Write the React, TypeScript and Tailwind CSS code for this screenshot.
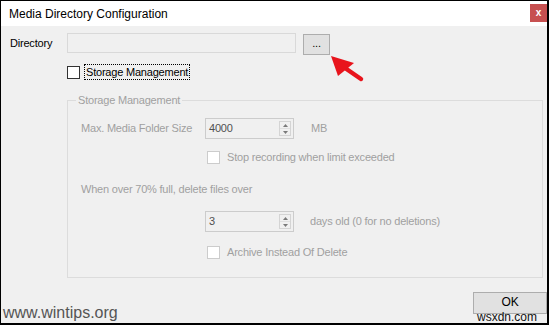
import React from 'react';

const font = "font-['Liberation_Sans',Arial,sans-serif]";

const Spinner: React.FC<{ value: string }> = ({ value }) => (
  <div className="w-[89px] h-[21px] border border-[#cccccc] bg-[#f0f0f0] flex items-center justify-between pl-[3px] pr-[2px]">
    <span className="text-[#505050] text-[11px]">{value}</span>
    <div className="w-[12px] h-[15px] border border-[#d4d4d4] flex flex-col">
      <div className="flex-1 flex items-center justify-center border-b border-[#e0e0e0]">
        <svg width="5" height="3" viewBox="0 0 5 3"><path d="M0 3 L2.5 0 L5 3 Z" fill="#7a7a7a" /></svg>
      </div>
      <div className="flex-1 flex items-center justify-center">
        <svg width="5" height="3" viewBox="0 0 5 3"><path d="M0 0 L2.5 3 L5 0 Z" fill="#7a7a7a" /></svg>
      </div>
    </div>
  </div>
);

const Check: React.FC<{ dark?: boolean }> = ({ dark }) => (
  <div
    className={
      dark
        ? 'w-[13px] h-[13px] border border-[#333333] bg-white'
        : 'w-[13px] h-[13px] border border-[#cccccc] bg-white'
    }
  />
);

export default function App() {
  return (
    <div className={`${font} relative w-[549px] h-[325px] overflow-hidden border-l border-t border-r-2 border-b-2 border-black bg-[#f0f0f0]`}>
      {/* title bar */}
      <div className="h-[25px] bg-white flex justify-between">
        <span className="self-center pl-[8px] text-[12px] text-black leading-none">Media Directory Configuration</span>
        <div className="mt-[3px] w-[17px] h-[18px] bg-[#c75050] flex items-center justify-center text-white text-[10px] font-bold leading-none">
          x
        </div>
      </div>

      <div className="text-[11px] tracking-[-0.2px] leading-none">
        {/* directory row */}
        <div className="mt-[7px] pl-[9px] flex items-start">
          <span className="w-[57px] h-[20px] flex items-center text-black">Directory</span>
          <div className="w-[229px] h-[20px] border border-[#d9d9d9] bg-[#f0f0f0]" />
          <button className="ml-[7px] mt-[1px] w-[27px] h-[21px] border border-[#adadad] bg-[#e1e1e1] text-black text-[11px] leading-none pb-[2px]">
            ...
          </button>
        </div>

        {/* storage management checkbox */}
        <div className="mt-[9px] pl-[66px] h-[16px] flex items-center">
          <Check dark />
          <span className="ml-[4px] h-[16px] px-[1px] flex items-center border border-dotted border-black text-black">
            Storage Management
          </span>
        </div>

        {/* group box */}
        <div className="relative mt-[20px] ml-[66px] w-[476px] h-[178px] border border-[#dcdcdc] text-[#a0a0a0]">
          <span className="absolute -top-[7px] left-[8px] px-[2px] bg-[#f0f0f0] leading-[13px]">Storage Management</span>

          <div className="mt-[17px] pl-[13px] flex items-center">
            <span className="w-[124px]">Max. Media Folder Size</span>
            <Spinner value="4000" />
            <span className="ml-[17px]">MB</span>
          </div>

          <div className="mt-[10px] pl-[139px] h-[16px] flex items-center">
            <Check />
            <span className="ml-[7px]">Stop recording when limit exceeded</span>
          </div>

          <div className="mt-[16px] pl-[13px] h-[16px] flex items-center">
            <span>When over 70% full, delete files over</span>
          </div>

          <div className="mt-[14px] pl-[137px] flex items-center">
            <Spinner value="3" />
            <span className="ml-[16px]">days old (0 for no deletions)</span>
          </div>

          <div className="mt-[12px] pl-[139px] h-[16px] flex items-center">
            <Check />
            <span className="ml-[7px]">Archive Instead Of Delete</span>
          </div>
        </div>

        {/* OK */}
        <div className="mt-[14px] pl-[472px]">
          <button className="w-[74px] h-[22px] border border-[#adadad] bg-[#e1e1e1] text-black text-[12px] leading-none pb-[3px]">
            OK
          </button>
        </div>
      </div>

      {/* red arrow annotation */}
      <svg className="absolute left-[325px] top-[50px] pointer-events-none" width="40" height="34" viewBox="0 0 40 34">
        <line x1="19" y1="17" x2="35" y2="28" stroke="#e8141c" strokeWidth="4.5" strokeLinecap="round" />
        <polygon points="5,5 12,25 28,12" fill="#e8141c" />
      </svg>

      {/* watermarks */}
      <span className="absolute left-[2px] top-[304px] text-[16px] leading-none text-[#555555] font-['Liberation_Sans',Arial,sans-serif]">
        www.wintips.org
      </span>
      <span className="absolute left-[476px] top-[310px] text-[12px] leading-none text-[#111111] font-['Liberation_Sans',Arial,sans-serif]">
        wsxdn.com
      </span>
    </div>
  );
}
